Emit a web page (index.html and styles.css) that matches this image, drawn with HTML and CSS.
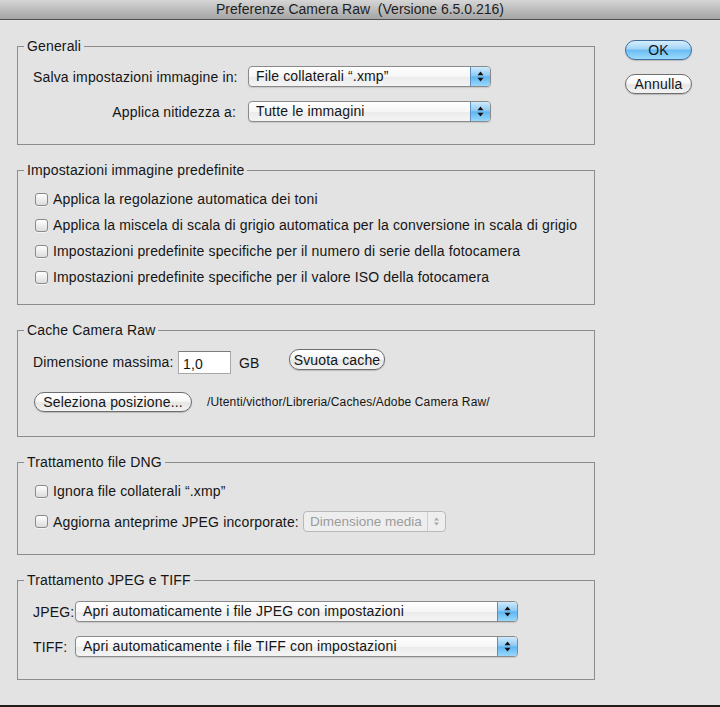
FILE: index.html
```html
<!DOCTYPE html>
<html lang="it">
<head>
<meta charset="utf-8">
<title>Preferenze Camera Raw</title>
<link rel="stylesheet" href="styles.css">
</head>
<body>
<div class="window">
  <div class="titlebar">Preferenze Camera Raw&nbsp; (Versione 6.5.0.216)</div>
  <div class="main">
    <div class="groups">
      <fieldset class="group g1">
        <legend>Generali</legend>
        <div class="form-grid">
          <span class="lbl">Salva impostazioni immagine in:</span>
          <div class="popup">
            <span class="val">File collaterali “.xmp”</span>
            <span class="arrows"><svg width="7" height="11" viewBox="0 0 7 11"><path d="M3.5 0.5 L6.5 4.2 H0.5Z M0.5 6.8 H6.5 L3.5 10.5Z" fill="#111"/></svg></span>
          </div>
          <span class="lbl">Applica nitidezza a:</span>
          <div class="popup">
            <span class="val">Tutte le immagini</span>
            <span class="arrows"><svg width="7" height="11" viewBox="0 0 7 11"><path d="M3.5 0.5 L6.5 4.2 H0.5Z M0.5 6.8 H6.5 L3.5 10.5Z" fill="#111"/></svg></span>
          </div>
        </div>
      </fieldset>

      <fieldset class="group g2">
        <legend>Impostazioni immagine predefinite</legend>
        <div class="rows">
          <div class="check"><span class="box"></span>Applica la regolazione automatica dei toni</div>
          <div class="check"><span class="box"></span>Applica la miscela di scala di grigio automatica per la conversione in scala di grigio</div>
          <div class="check"><span class="box"></span>Impostazioni predefinite specifiche per il numero di serie della fotocamera</div>
          <div class="check"><span class="box"></span>Impostazioni predefinite specifiche per il valore ISO della fotocamera</div>
        </div>
      </fieldset>

      <fieldset class="group g3">
        <legend>Cache Camera Raw</legend>
        <div class="rows cache">
          <div class="cache-row1">
            <span class="cache-lbl">Dimensione massima:</span>
            <span class="field">1,0</span>
            <span class="unit">GB</span>
            <span class="btn btn-svuota">Svuota cache</span>
          </div>
          <div class="cache-row2">
            <span class="btn btn-sel">Seleziona posizione...</span>
            <span class="path">/Utenti/victhor/Libreria/Caches/Adobe Camera Raw/</span>
          </div>
        </div>
      </fieldset>

      <fieldset class="group g4">
        <legend>Trattamento file DNG</legend>
        <div class="rows dng">
          <div class="check"><span class="box"></span>Ignora file collaterali “.xmp”</div>
          <div class="check dng-row2"><span class="box"></span><span class="dng-lbl">Aggiorna anteprime JPEG incorporate:</span>
            <div class="popup disabled">
              <span class="val">Dimensione media</span>
              <span class="arrows"><svg width="7" height="11" viewBox="0 0 7 11"><path d="M3.5 1.5 L6 4.5 H1Z M1 6.5 H6 L3.5 9.5Z" fill="#a8a8a8"/></svg></span>
            </div>
          </div>
        </div>
      </fieldset>

      <fieldset class="group g5">
        <legend>Trattamento JPEG e TIFF</legend>
        <div class="rows jt">
          <div class="jt-row">
            <span class="jt-lbl">JPEG:</span>
            <div class="popup wide">
              <span class="val">Apri automaticamente i file JPEG con impostazioni</span>
              <span class="arrows"><svg width="7" height="11" viewBox="0 0 7 11"><path d="M3.5 0.5 L6.5 4.2 H0.5Z M0.5 6.8 H6.5 L3.5 10.5Z" fill="#111"/></svg></span>
            </div>
          </div>
          <div class="jt-row">
            <span class="jt-lbl">TIFF:</span>
            <div class="popup wide">
              <span class="val">Apri automaticamente i file TIFF con impostazioni</span>
              <span class="arrows"><svg width="7" height="11" viewBox="0 0 7 11"><path d="M3.5 0.5 L6.5 4.2 H0.5Z M0.5 6.8 H6.5 L3.5 10.5Z" fill="#111"/></svg></span>
            </div>
          </div>
        </div>
      </fieldset>
    </div>

    <div class="actions">
      <span class="btn btn-ok">OK</span>
      <span class="btn btn-cancel">Annulla</span>
    </div>
  </div>
</div>
</body>
</html>
```

FILE: styles.css
```css
html {
  background: #231d18;
}
body {
  margin: 0;
  font-family: "Liberation Sans", Arial, sans-serif;
  font-size: 14px;
  line-height: 16px;
  letter-spacing: 0.15px;
  color: #151515;
}
.window {
  height: 705px;
  background: #e3e3e3;
  overflow: hidden;
}
.titlebar {
  height: 19px;
  line-height: 19px;
  text-align: center;
  font-size: 14px;
  letter-spacing: 0;
  color: #1e1e1e;
  background: linear-gradient(to bottom, #d6d6d6, #a4a4a4);
  border-bottom: 1px solid #505050;
}
.main {
  display: flex;
  padding: 18px 0 0 17px;
}
.groups {
  width: 578px;
  display: flex;
  flex-direction: column;
  gap: 17px;
}
.group {
  margin: 0;
  padding: 0 15px;
  min-width: 0;
  border: 1px solid #8c8c8c;
}
.group legend {
  padding: 0 3px;
  margin-left: -9px;
  line-height: 16px;
}
.g1 { padding-top: 12px; padding-bottom: 22px; }
.g2 { padding-top: 11px; padding-bottom: 17px; }
.g3 { padding-top: 11px; padding-bottom: 24px; }
.g4 { padding-top: 11px; padding-bottom: 22px; }
.g5 { padding-top: 13px; padding-bottom: 22px; }

.form-grid {
  display: grid;
  grid-template-columns: 203px 243px;
  column-gap: 12px;
  row-gap: 14px;
  align-items: center;
}
.lbl {
  text-align: right;
  white-space: nowrap;
}

.popup {
  display: flex;
  height: 21px;
  box-sizing: border-box;
  border: 1px solid #8a8a8a;
  border-radius: 4px;
  overflow: hidden;
  background: linear-gradient(to bottom, #ffffff 0%, #f6f6f6 50%, #ebebeb 51%, #f4f4f4 100%);
  box-shadow: 0 1px 1px rgba(0,0,0,0.12);
}
.popup .val {
  flex: 1;
  padding-left: 7px;
  line-height: 19px;
  white-space: nowrap;
}
.popup .arrows {
  width: 19px;
  display: flex;
  align-items: center;
  justify-content: center;
  border-left: 1px solid #5b8ec2;
  background: linear-gradient(to bottom, #d0eafc 0%, #8fcaf5 45%, #5fb5f1 52%, #9ad8fc 100%);
}
.popup.disabled {
  width: 143px;
  flex: none;
  border-color: #b9b9b9;
  background: #eeeeee;
  box-shadow: none;
  color: #9c9c9c;
}
.popup.disabled .val {
  padding-left: 6px;
  font-size: 13.5px;
  letter-spacing: 0;
  overflow: hidden;
}
.popup.disabled .arrows {
  width: 17px;
  flex: none;
  background: none;
  border-left: 1px solid #d0d0d0;
}
.popup.wide {
  width: 443px;
}

.rows {
  display: flex;
  flex-direction: column;
  gap: 6px;
}
.check {
  display: flex;
  align-items: center;
  height: 20px;
  white-space: nowrap;
}
.check .box {
  width: 11px;
  height: 11px;
  margin: 0 5px 0 2px;
  border: 1px solid #8a8a8a;
  border-radius: 3px;
  background: linear-gradient(to bottom, #ffffff, #dcdcdc);
  box-shadow: 0 1px 0 rgba(255,255,255,0.6);
  flex: none;
}

.cache {
  gap: 18px;
}
.cache-row1 {
  display: flex;
  align-items: flex-start;
  height: 25px;
}
.cache-lbl {
  width: 145px;
  margin-top: 5px;
  white-space: nowrap;
}
.field {
  width: 53px;
  height: 23px;
  box-sizing: border-box;
  margin-top: 2px;
  padding: 4px 0 0 4px;
  background: #ffffff;
  border: 1px solid #a8a8a8;
  border-top-color: #7c7c7c;
}
.unit {
  width: 50px;
  margin: 6px 0 0 8px;
}
.btn {
  display: inline-flex;
  align-items: center;
  justify-content: center;
  height: 20px;
  box-sizing: border-box;
  border: 1px solid #6e6e6e;
  border-radius: 10px;
  background: linear-gradient(to bottom, #ffffff 0%, #f7f7f7 45%, #e6e6e6 55%, #f3f3f3 100%);
  box-shadow: 0 1px 1px rgba(0,0,0,0.18);
  white-space: nowrap;
}
.btn-svuota {
  width: 96px;
  height: 21px;
}
.cache-row2 {
  display: flex;
  align-items: center;
  height: 20px;
}
.btn-sel {
  width: 158px;
  margin-left: 1px;
}
.path {
  margin-left: 15px;
  font-size: 12px;
}

.dng {
  gap: 10px;
}
.dng-row2 {
  height: 21px;
}
.dng-lbl {
  width: 250px;
}

.jt {
  gap: 14px;
}
.jt-row {
  display: flex;
  align-items: center;
}
.jt-lbl {
  width: 42px;
}

.actions {
  display: flex;
  flex-direction: column;
  gap: 14px;
  margin: 2px 0 0 30px;
}
.btn-ok,
.btn-cancel {
  width: 67px;
}
.btn-ok {
  border-color: #3f6d9f;
  background: linear-gradient(to bottom, #d6eefe 0%, #a5d6f8 42%, #6bbcf4 52%, #9bdcfd 100%);
}
```
